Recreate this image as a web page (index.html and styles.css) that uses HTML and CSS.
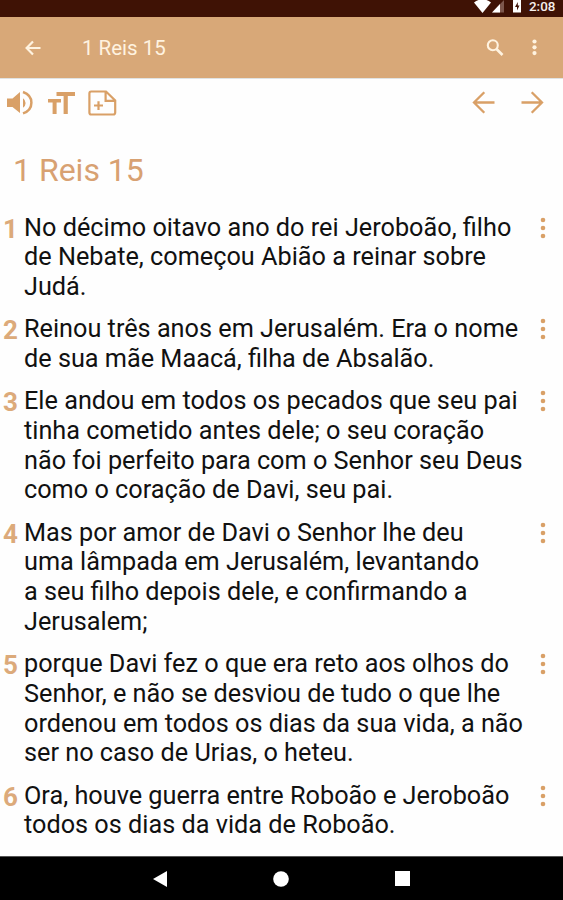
FILE: index.html
```html
<!DOCTYPE html>
<html lang="pt">
<head>
<meta charset="utf-8">
<title>1 Reis 15</title>
<link rel="stylesheet" href="styles.css">
</head>
<body>
<svg width="0" height="0" class="defs"><defs>
<symbol id="dots" viewBox="0 0 6 22"><circle cx="3" cy="3" r="2.3"/><circle cx="3" cy="11" r="2.3"/><circle cx="3" cy="19" r="2.3"/></symbol>
</defs></svg>
<div class="status">
<svg class="status-icons" width="52" height="17" viewBox="0 0 52 17"><path d="M0 2.5Q8.5-4 17 2.5L8.5 13Z" fill="#fff"/><path d="M30 0V12.5H18Z" fill="#7d574c"/><path d="M26 4V12.5H18Z" fill="#fff"/><path d="M39 0H47V12.5H39Z" fill="#fff"/><path d="M43.8 2L41 7H43V10.5L45.5 5.5H43.8Z" fill="#3d1206"/></svg>
<span class="clock">2:08</span>
</div>
<header class="appbar">
<svg class="back" width="16" height="16" viewBox="0 0 16 16"><path d="M15.5 8H2M8 1.5L1.6 8L8 14.5" fill="none" stroke="#fff3e0" stroke-width="2.2"/></svg>
<h1>1 Reis 15</h1>
<svg class="search" width="18" height="18" viewBox="0 0 18 18" fill="none" stroke="#fff3e0"><circle cx="6.8" cy="6.3" r="5" stroke-width="2.1"/><path d="M10.5 10L16.5 16" stroke-width="2.6"/></svg>
<svg class="more" width="5" height="17" viewBox="0 0 5 17" fill="#fff3e0"><circle cx="2.5" cy="2.5" r="2.1"/><circle cx="2.5" cy="8.3" r="2.1"/><circle cx="2.5" cy="14.1" r="2.1"/></svg>
</header>
<nav class="tools">
<svg class="sound" width="26" height="26" viewBox="0 0 26 26"><path d="M0 8.5H5.5L13 2V23L5.5 17H0Z" fill="#d9a067"/><path d="M16 8.2Q18.6 10 18.6 13T16 17.8Z" fill="#d9a067"/><path d="M16 2Q24.4 5 24.4 12.7T16 23.4" fill="none" stroke="#d9a067" stroke-width="2.5"/></svg>
<svg class="size" width="27" height="22" viewBox="0 0 27 22"><path d="M8.5 0H27V4H19.8V22H15.6V4H8.5ZM0 7H13V10.6H8.6V22H4.6V10.6H0Z" fill="#d9a067"/></svg>
<svg class="note" width="29" height="26" viewBox="0 0 29 26" fill="none" stroke="#d9a067" stroke-width="2.2"><path d="M3.2 1.5H18L27.2 10.5V22.5Q27.2 24.5 25.2 24.5H3.2Q1.4 24.5 1.4 22.5V3.5Q1.4 1.5 3.2 1.5ZM17.6 1.5V10.8H27M6 15.5H15M10.5 11.2V20"/></svg>
<svg class="prev" width="23" height="23" viewBox="0 0 23 23" fill="none" stroke="#d9a067" stroke-width="2.3"><path d="M22.5 11.5H2M12.3 1.2L2 11.5L12.3 21.8"/></svg>
<svg class="next" width="23" height="23" viewBox="0 0 23 23" fill="none" stroke="#d9a067" stroke-width="2.3"><path d="M.5 11.5H21M10.7 1.2L21 11.5L10.7 21.8"/></svg>
</nav>
<main>
<h2>1 Reis 15</h2>
<div class="verse"><b>1</b><p>No décimo oitavo ano do rei Jeroboão, filho<br>de Nebate, começou Abião a reinar sobre<br>Judá.</p><svg><use href="#dots"/></svg></div>
<div class="verse"><b>2</b><p>Reinou três anos em Jerusalém. Era o nome<br>de sua mãe Maacá, filha de Absalão.</p><svg><use href="#dots"/></svg></div>
<div class="verse"><b>3</b><p>Ele andou em todos os pecados que seu pai<br>tinha cometido antes dele; o seu coração<br>não foi perfeito para com o Senhor seu Deus<br>como o coração de Davi, seu pai.</p><svg><use href="#dots"/></svg></div>
<div class="verse"><b>4</b><p>Mas por amor de Davi o Senhor lhe deu<br>uma lâmpada em Jerusalém, levantando<br>a seu filho depois dele, e confirmando a<br>Jerusalem;</p><svg><use href="#dots"/></svg></div>
<div class="verse"><b>5</b><p>porque Davi fez o que era reto aos olhos do<br>Senhor, e não se desviou de tudo o que lhe<br>ordenou em todos os dias da sua vida, a não<br>ser no caso de Urias, o heteu.</p><svg><use href="#dots"/></svg></div>
<div class="verse"><b>6</b><p>Ora, houve guerra entre Roboão e Jeroboão<br>todos os dias da vida de Roboão.</p><svg><use href="#dots"/></svg></div>
</main>
<footer class="navbar">
<svg width="14" height="16" viewBox="0 0 14 16"><path d="M14 0V16L0 8Z" fill="#fff"/></svg>
<svg width="16" height="16" viewBox="0 0 16 16"><circle cx="8" cy="8" r="7.8" fill="#fff"/></svg>
<svg width="15" height="15" viewBox="0 0 15 15"><path d="M0 0H15V15H0Z" fill="#fff"/></svg>
</footer>
</body>
</html>
```
FILE: styles.css
```css
* { box-sizing: border-box; margin: 0; padding: 0; }
body {
  width: 563px;
  height: 900px;
  overflow: hidden;
  display: flex;
  flex-direction: column;
  background: #fefefe;
  font-family: Roboto, sans-serif;
  color: #111;
}
svg { display: block; flex: none; }
.defs { position: absolute; }
.status {
  flex: none;
  height: 17px;
  background: #3f1205;
  display: flex;
  justify-content: flex-end;
  padding-right: 8px;
}
.clock {
  width: 26px;
  margin-left: 4px;
  font-size: 13.4px;
  font-weight: 500;
  line-height: 13px;
  color: #f5eeeb;
}
.status-icons { margin-right: -1px; }
.appbar {
  flex: none;
  height: 61px;
  background: #d8a878;
  display: flex;
  align-items: center;
  padding: 0 26px 0 25px;
}
h1 {
  margin-left: 41px;
  font-size: 20.5px;
  font-weight: 400;
  line-height: 24px;
  color: #fff3e0;
}
.search { margin-left: auto; }
.more { margin-left: 28px; }
.tools {
  flex: none;
  height: 48px;
  border-top: 1px solid #e0e3e3;
  display: flex;
  align-items: center;
  padding: 0 19px 0 7px;
}
.size { margin-left: 15px; }
.note { margin-left: 13px; }
.prev { margin-left: auto; }
.next { margin-left: 26px; }
main { flex: 1; min-height: 0; overflow: hidden; }
h2 {
  margin: 24px 0 0 13px;
  height: 62.6px;
  font-size: 32px;
  font-weight: 400;
  line-height: 40px;
  letter-spacing: 0;
  color: #d8a172;
}
.verse {
  display: flex;
  margin-bottom: 12.6px;
  padding-left: 3px;
}
.verse b {
  width: 21px;
  font-size: 26px;
  font-weight: 700;
  line-height: 33px;
  height: 29px;
  color: #dcaa7a;
}
.verse p {
  flex: 1;
  font-size: 25.25px;
  line-height: 29.7px;
  white-space: nowrap;
}
.verse svg {
  width: 6px;
  height: 22px;
  margin: 4px 17px 0 0;
  fill: #d9a067;
}
.navbar {
  flex: none;
  height: 44px;
  background: #000;
  border-top: 1px solid #555;
  display: flex;
  align-items: center;
  padding-left: 153px;
}
.navbar svg + svg { margin-left: 106px; }
```
